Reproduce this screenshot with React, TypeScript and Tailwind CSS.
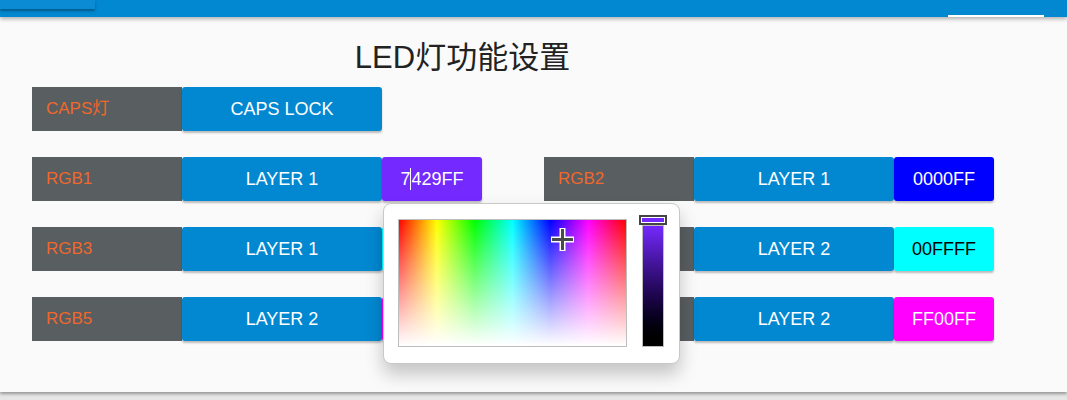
import React from 'react'

interface LedRow {
  label: string
  layer: string
  color: string
  text: string
  dark?: boolean
}

const LEFT_ROWS: LedRow[] = [
  { label: 'RGB1', layer: 'LAYER 1', color: '#7429ff', text: '7429FF' },
  { label: 'RGB3', layer: 'LAYER 1', color: '#00ffff', text: '00FFFF' },
  { label: 'RGB5', layer: 'LAYER 2', color: '#ff00ff', text: 'FF00FF' },
]

const RIGHT_ROWS: LedRow[] = [
  { label: 'RGB2', layer: 'LAYER 1', color: '#0000ff', text: '0000FF' },
  { label: 'RGB4', layer: 'LAYER 2', color: '#00ffff', text: '00FFFF', dark: true },
  { label: 'RGB6', layer: 'LAYER 2', color: '#ff00ff', text: 'FF00FF' },
]

function Label({ children }: { children: React.ReactNode }) {
  return (
    <div className="w-[150px] shrink-0 bg-[#595e61] text-[#f0682a] text-[17px] pl-[14px] flex items-center">
      {children}
    </div>
  )
}

function LayerButton({ children }: { children: React.ReactNode }) {
  return (
    <button className="w-[200px] shrink-0 bg-[#0288d1] text-white text-[18px] rounded-[3px] shadow-[0_2px_2px_rgba(0,0,0,0.25)] flex items-center justify-center">
      {children}
    </button>
  )
}

function ColorPicker() {
  return (
    <div className="absolute left-px top-[46px] z-10 w-[297px] h-[161px] bg-white border border-[#c8c8c8] rounded-[8px] shadow-[0_10px_18px_rgba(0,0,0,0.22)] flex pl-[14px] pt-[15px] gap-[15px]">
      {/* saturation / hue area */}
      <div className="relative w-[229px] h-[128px] border border-[#bdbdbd] bg-[linear-gradient(to_right,#ff0000,#ffff00,#00ff00,#00ffff,#0000ff,#ff00ff,#ff0000)]">
        <div className="absolute inset-0 bg-linear-to-b from-transparent to-white" />
        <svg className="absolute left-[150px] top-[6px]" width="27" height="27" viewBox="0 0 27 27">
          <path d="M13.5 2v23M2 13.5h23" stroke="#fff" strokeWidth="6" />
          <path d="M13.5 3v21M3 13.5h21" stroke="#4a4a4a" strokeWidth="3" />
        </svg>
      </div>
      {/* value slider */}
      <div className="relative w-[22px] h-[122px] mt-[6px] border border-[#bdbdbd] bg-linear-to-b from-[#7429ff] to-black">
        <div className="absolute -left-[4px] -top-[11px] w-[28px] h-[10px] bg-[#444] p-[2px]">
          <div className="w-full h-full border border-white bg-[#7429ff]" />
        </div>
      </div>
    </div>
  )
}

function ColorCell({ row, editing }: { row: LedRow; editing?: boolean }) {
  return (
    <div className="relative w-[100px] shrink-0">
      <div
        className={`h-full rounded-[3px] shadow-[0_2px_2px_rgba(0,0,0,0.25)] text-[18px] flex items-center justify-center ${
          row.dark ? 'text-black' : 'text-white'
        }`}
        style={{ backgroundColor: row.color }}
      >
        {editing ? (
          <>
            {row.text.slice(0, 1)}
            <span className="inline-block w-px h-[22px] bg-white" />
            {row.text.slice(1)}
          </>
        ) : (
          row.text
        )}
      </div>
      {editing && <ColorPicker />}
    </div>
  )
}

function Row({ row, editing }: { row: LedRow; editing?: boolean }) {
  return (
    <div className="flex h-[44px]">
      <Label>{row.label}</Label>
      <LayerButton>{row.layer}</LayerButton>
      <ColorCell row={row} editing={editing} />
    </div>
  )
}

export default function App() {
  return (
    <div className="w-[1067px] h-[400px] overflow-hidden bg-[#e6e6e6] font-['Liberation_Sans','Noto_Sans_CJK_SC',sans-serif]">
      <header className="relative h-[17px] bg-[#0288d1] shadow-[0_2px_4px_rgba(0,0,0,0.3)] z-20">
        <div className="absolute left-0 top-0 w-[95px] h-[9px] bg-[#0a8bd3] shadow-[0_2px_3px_rgba(0,0,0,0.35)]" />
        <div className="absolute left-[948px] bottom-0 w-[96px] h-[2px] bg-white" />
      </header>

      <main className="h-[375px] bg-[#fafafa] shadow-[0_2px_3px_rgba(0,0,0,0.35)] pt-[23px] pl-[32px]">
        <h1 className="w-[861px] text-center text-[31px] leading-[36px] text-[#222]">LED灯功能设置</h1>

        <div className="mt-[11px] flex flex-col gap-[26px]">
          <div className="flex h-[44px]">
            <Label>CAPS灯</Label>
            <LayerButton>CAPS LOCK</LayerButton>
          </div>

          <div className="flex gap-[62px]">
            <div className="flex flex-col gap-[26px]">
              {LEFT_ROWS.map((r, i) => (
                <Row key={r.label} row={r} editing={i === 0} />
              ))}
            </div>
            <div className="flex flex-col gap-[26px]">
              {RIGHT_ROWS.map(r => (
                <Row key={r.label} row={r} />
              ))}
            </div>
          </div>
        </div>
      </main>
    </div>
  )
}
